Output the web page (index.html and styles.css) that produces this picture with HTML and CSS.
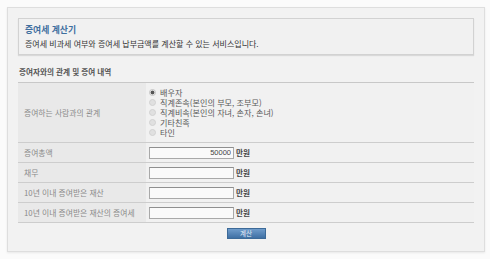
FILE: index.html
```html
<!DOCTYPE html>
<html lang="ko">
<head>
    <meta charset="UTF-8">
    <title>증여세 계산기</title>
    <link rel="stylesheet" href="styles.css">
</head>
<body>
    <div class="panel">
        <div class="intro">
            <h2>증여세 계산기</h2>
            <p>증여세 비과세 여부와 증여세 납부금액를 계산할 수 있는 서비스입니다.</p>
        </div>

        <h3 class="section-title">증여자와의 관계 및 증여 내역</h3>

        <form class="calc">
            <div class="row tall">
                <div class="label">증여하는 사람과의 관계</div>
                <div class="value radios">
                    <label><input type="radio" name="rel" checked><span>배우자</span></label>
                    <label><input type="radio" name="rel"><span>직계존속(본인의 부모, 조부모)</span></label>
                    <label><input type="radio" name="rel"><span>직계비속(본인의 자녀, 손자, 손녀)</span></label>
                    <label><input type="radio" name="rel"><span>기타친족</span></label>
                    <label><input type="radio" name="rel"><span>타인</span></label>
                </div>
            </div>
            <div class="row">
                <div class="label">증여총액</div>
                <div class="value"><input type="text" class="amount" value="50000"><span class="unit">만원</span></div>
            </div>
            <div class="row">
                <div class="label">채무</div>
                <div class="value"><input type="text" class="amount"><span class="unit">만원</span></div>
            </div>
            <div class="row">
                <div class="label">10년 이내 증여받은 재산</div>
                <div class="value"><input type="text" class="amount"><span class="unit">만원</span></div>
            </div>
            <div class="row">
                <div class="label">10년 이내 증여받은 재산의 증여세</div>
                <div class="value"><input type="text" class="amount"><span class="unit">만원</span></div>
            </div>

            <div class="actions">
                <button type="button">계산</button>
            </div>
        </form>
    </div>
</body>
</html>
```

FILE: styles.css
```css
body {
    margin: 0;
    background-color: #fbfbfb;
    font-family: "Noto Sans CJK KR", "Noto Sans", sans-serif;
}

.panel {
    margin: 7px;
    width: 456px;
    height: 223px;
    padding: 10px;
    background-color: #f2f2f2;
    border: 1px solid #dedede;
    box-shadow: 0 1px 2px rgba(0, 0, 0, 0.08);
}

/* top box */
.intro {
    height: 35px;
    padding: 0 6px;
    background-color: #f1f1f1;
    border: 1px solid #d2d2d2;
    box-shadow: 0 1px 1px rgba(0, 0, 0, 0.1);
}

.intro h2 {
    margin: 4px 0 0;
    font-size: 8.8px;
    line-height: 14px;
    color: #3f6f9f;
    font-weight: bold;
}

.intro p {
    margin: 0;
    font-size: 8px;
    line-height: 13px;
    color: #333;
}

.section-title {
    margin: 11px 0 0;
    padding-left: 1px;
    height: 16px;
    font-size: 7.6px;
    line-height: 12px;
    color: #555;
    border-bottom: 1px solid #c8c8c8;
}

/* table rows */
.row {
    display: grid;
    grid-template-columns: 128px 1fr;
    height: 19px;
    border-bottom: 1px solid #cdcdcd;
}

.row.tall {
    height: 59px;
}

.label {
    display: flex;
    align-items: center;
    padding-left: 6px;
    background-color: #e9e9e9;
    font-size: 7.8px;
    color: #8a8a8a;
}

.value {
    display: flex;
    align-items: center;
    padding-left: 3px;
    background-color: #f1f1f1;
}

.radios {
    flex-direction: column;
    align-items: flex-start;
    justify-content: center;
    padding-left: 3px;
}

.radios label {
    display: flex;
    align-items: center;
    height: 10px;
    font-size: 8.1px;
    color: #5a5a5a;
}

.radios input {
    width: 7px;
    height: 7px;
    margin: 0 4px 0 0;
    appearance: none;
    border-radius: 50%;
    background-color: #e0e0e0;
    border: 1px solid #d2d2d2;
}

.radios input:checked {
    background: radial-gradient(circle, #555 0 1.6px, #e4e4e4 2.2px);
    border-color: #c4c4c4;
}

.amount {
    width: 79px;
    height: 8px;
    margin: 0;
    padding: 1px 2px;
    border: 1px solid #a9a9a9;
    border-top-color: #8f8f8f;
    background-color: #fafafa;
    font-family: "Liberation Sans", sans-serif;
    font-size: 7.5px;
    text-align: right;
    color: #444;
}

.unit {
    margin-left: 2px;
    font-size: 7.6px;
    font-weight: bold;
    color: #444;
}

.actions {
    display: flex;
    justify-content: center;
    padding-top: 5px;
}

button {
    width: 39px;
    height: 11px;
    padding: 0;
    border: 1px solid #3c6a98;
    background: linear-gradient(#6f9ccb, #3f70a4);
    color: #e8f0f8;
    font-family: "Noto Sans CJK KR", sans-serif;
    font-size: 6.5px;
    line-height: 9px;
}
```
